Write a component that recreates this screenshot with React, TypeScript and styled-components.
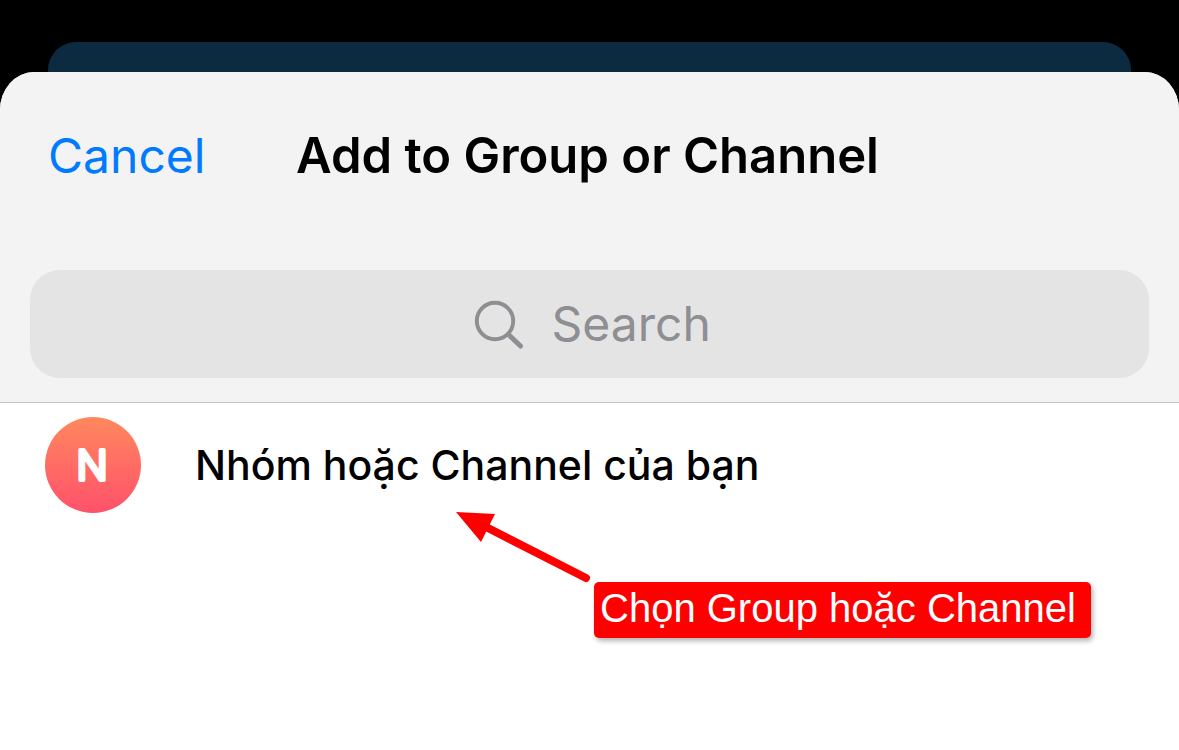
import React from "react";
import styled, { createGlobalStyle } from "styled-components";

const GlobalStyle = createGlobalStyle`
  *, *::before, *::after { box-sizing: border-box; }
  html, body { margin: 0; background: #fff; }
  body { font-family: Inter, "Noto Sans", sans-serif; color: #000; }
`;

const Screen = styled.div`
  min-height: 100vh;
  background: linear-gradient(#000 0 160px, #fff 160px);
  padding-top: 42px;
  display: flex;
  flex-direction: column;
`;

const BackCard = styled.div`
  height: 30px;
  margin: 0 48px;
  border-radius: 28px 28px 0 0;
  background: #0c2b40;
`;

const Sheet = styled.main`
  flex: 1;
  display: flex;
  flex-direction: column;
  background: #fff;
  border-radius: 34px 34px 0 0 / 38px 38px 0 0;
  overflow: hidden;
`;

const Header = styled.header`
  background: #f3f3f3;
  border-bottom: 1px solid #c4c4c6;
  padding-bottom: 24px;
`;

const NavBar = styled.div`
  display: grid;
  grid-template-columns: 1fr auto 1fr;
  align-items: center;
  padding: 54px 52px 84px 48px;
`;

const CancelButton = styled.button`
  justify-self: start;
  border: 0;
  padding: 0;
  background: none;
  color: #007aff;
  font: 400 48px/60px Inter, sans-serif;
  cursor: pointer;
`;

const Title = styled.h1`
  margin: 0;
  font-size: 49px;
  line-height: 60px;
  font-weight: 600;
  white-space: nowrap;
`;

const SearchField = styled.label`
  display: flex;
  align-items: center;
  justify-content: center;
  gap: 28px;
  height: 108px;
  margin: 0 30px;
  padding-left: 6px;
  border-radius: 30px;
  background: #e4e4e4;
  color: #8e8e93;
`;

const SearchInput = styled.input`
  field-sizing: content;
  min-width: 160px;
  border: 0;
  padding: 0;
  outline: 0;
  background: none;
  color: #000;
  font: 400 48px/60px Inter, sans-serif;
  &::placeholder { color: #8e8e93; opacity: 1; }
`;

const Content = styled.section`
  position: relative;
  flex: 1;
`;

const ChatList = styled.ul`
  list-style: none;
  margin: 0;
  padding: 14px 45px;
`;

const ChatRow = styled.button`
  display: flex;
  align-items: center;
  gap: 54px;
  width: 100%;
  border: 0;
  padding: 0;
  background: none;
  color: #000;
  text-align: left;
  font: 500 41px/52px Inter, sans-serif;
  cursor: pointer;
`;

const Avatar = styled.span`
  flex: none;
  width: 96px;
  height: 96px;
  border-radius: 50%;
  background: linear-gradient(#ff885e, #ff516a);
`;

const Arrow = styled.svg`
  position: absolute;
  left: 450px;
  top: 102px;
`;

const Callout = styled.p`
  position: absolute;
  left: 594px;
  top: 179px;
  margin: 0;
  padding: 4px 15px 8px 6px;
  border-radius: 5px;
  background: #f00;
  color: #fff;
  font: 400 40px/44px "Liberation Sans", Arial, sans-serif;
  white-space: nowrap;
  box-shadow: 2px 3px 5px rgba(0, 0, 0, 0.3);
`;

const SearchIcon = () => (
  <svg width="50" height="50" viewBox="0 0 50 50" fill="none" stroke="currentColor" aria-hidden="true">
    <circle cx="21" cy="22" r="18.2" strokeWidth="3.9" />
    <path d="M34.5 35.5 46.5 47" strokeWidth="5" strokeLinecap="round" />
  </svg>
);

const Initial = ({ letter }: { letter: string }) => (
  <svg width="96" height="96" viewBox="0 0 96 96" aria-hidden="true">
    <text
      x="47"
      y="63"
      textAnchor="middle"
      fontFamily="Inter, sans-serif"
      fontSize="41"
      fontWeight="300"
      fill="#fff"
      stroke="#fff"
      strokeWidth="4"
      strokeLinejoin="round"
    >
      {letter}
    </text>
  </svg>
);

const chats = [{ initial: "N", name: "Nhóm hoặc Channel của bạn" }];

export default function App() {
  return (
    <>
      <GlobalStyle />
      <Screen>
        <BackCard />
        <Sheet>
          <Header>
            <NavBar>
              <CancelButton type="button">Cancel</CancelButton>
              <Title>Add to Group or Channel</Title>
            </NavBar>
            <SearchField>
              <SearchIcon />
              <SearchInput type="text" placeholder="Search" aria-label="Search" />
            </SearchField>
          </Header>
          <Content>
            <ChatList>
              {chats.map((chat) => (
                <li key={chat.name}>
                  <ChatRow type="button">
                    <Avatar>
                      <Initial letter={chat.initial} />
                    </Avatar>
                    {chat.name}
                  </ChatRow>
                </li>
              ))}
            </ChatList>
            <Arrow width="145" height="80" viewBox="0 0 145 80" fill="#f00" aria-hidden="true">
              <path d="M6 7 45 9 31 37Z" />
              <path d="M38 23 136 73" stroke="#f00" strokeWidth="8" strokeLinecap="round" />
            </Arrow>
            <Callout>Chọn Group hoặc Channel</Callout>
          </Content>
        </Sheet>
      </Screen>
    </>
  );
}
